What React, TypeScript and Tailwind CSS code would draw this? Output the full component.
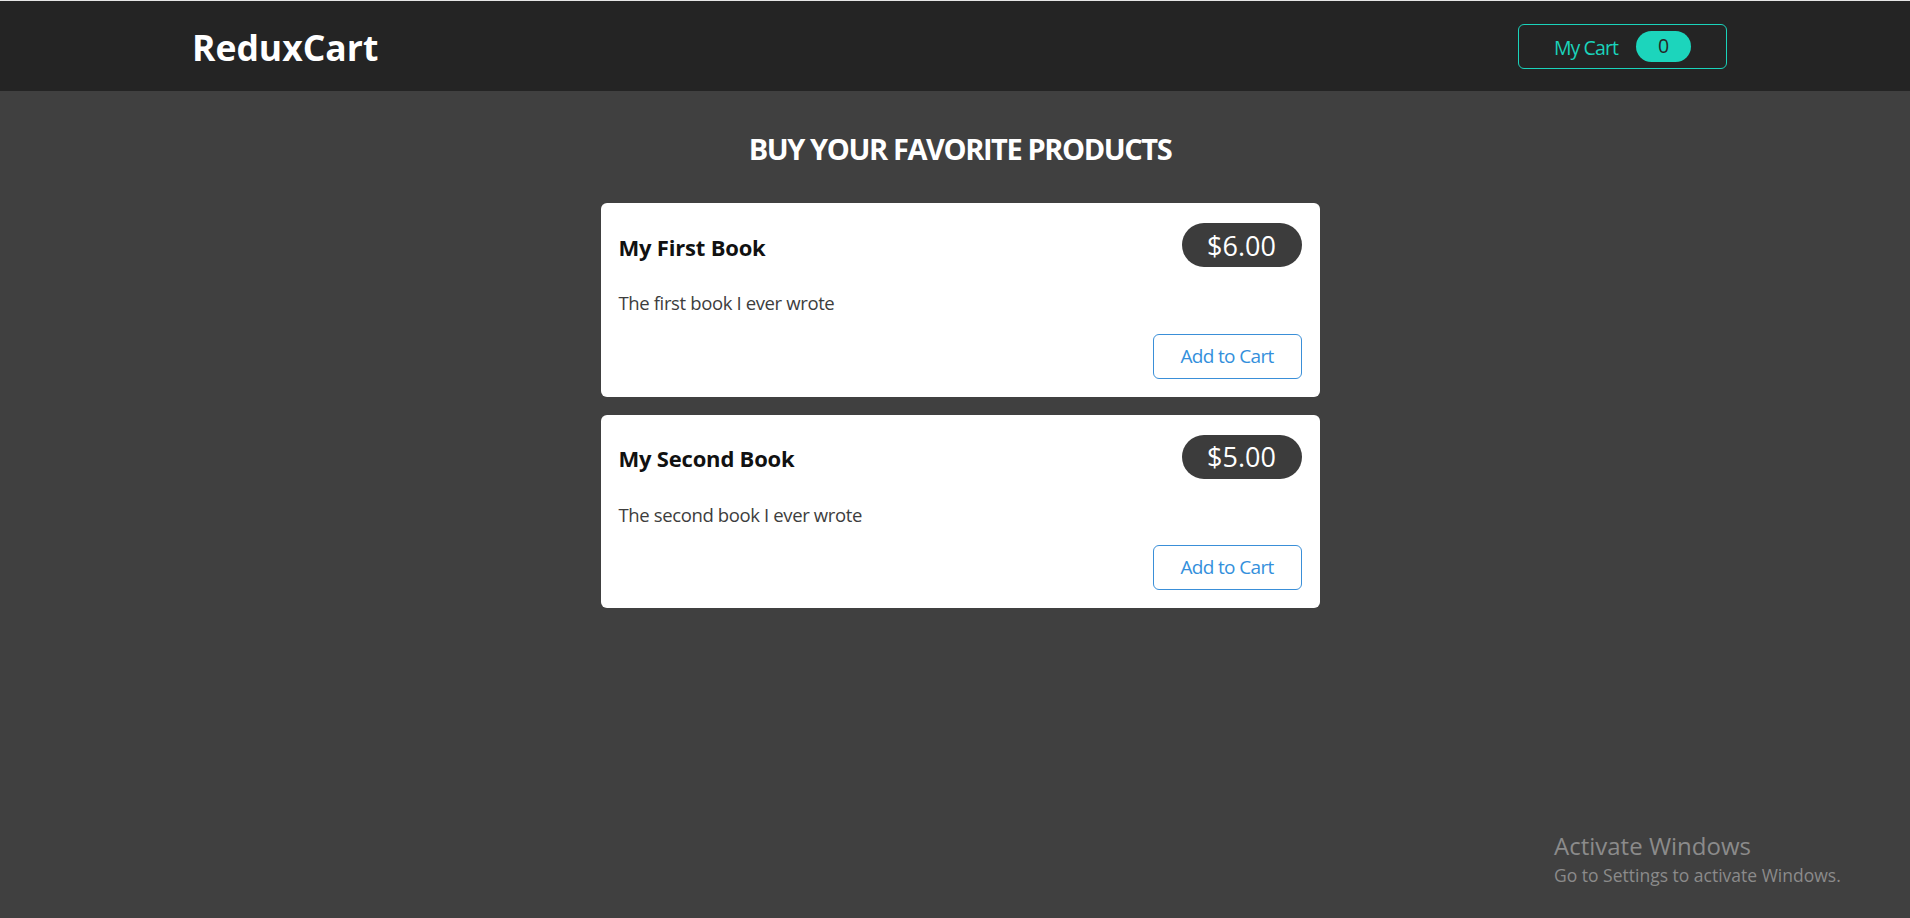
import React from "react";

const products = [
  { title: "My First Book", price: "$6.00", desc: "The first book I ever wrote" },
  { title: "My Second Book", price: "$5.00", desc: "The second book I ever wrote" },
];

export default function App() {
  return (
    <div className="relative min-h-screen bg-[#404040] font-['Open_Sans',sans-serif]">
      <div className="h-px bg-[#e6e6e6]" />
      <header className="flex h-[90px] items-center justify-between bg-[#242424] pl-[192px] pr-[183px]">
        <h1 className="mt-[4px] text-[35.5px] font-bold leading-none text-white">ReduxCart</h1>
        <button className="flex h-[45px] w-[209px] items-center justify-center gap-[18px] rounded-[6px] border border-[#1ad3bb] text-[19.5px] text-[#1ad3bb]">
          <span className="mt-[4px] leading-none tracking-[-0.9px]">My Cart</span>
          <span className="flex h-[31px] w-[55px] items-center justify-center rounded-full bg-[#1cd5bc] text-[19.5px] leading-none text-[#262626]">0</span>
        </button>
      </header>
      <main className="flex flex-col items-center pl-[10px]">
        <h2 className="mt-[43px] text-[29px] font-bold leading-none tracking-[-1.4px] text-white">BUY YOUR FAVORITE PRODUCTS</h2>
        <ul className="mt-[40px] flex flex-col gap-[18px]">
          {products.map((p) => (
            <li key={p.title} className="flex w-[719px] flex-col rounded-[6px] bg-white px-[18px] pb-[18px] pt-[20px]">
              <div className="flex items-center justify-between">
                <h3 className="mt-[3px] text-[22px] font-bold leading-none tracking-[-0.2px] text-[#111]">{p.title}</h3>
                <span className="flex h-[44px] w-[120px] items-center justify-center rounded-full bg-[#3c3c3c] text-[27px] leading-none text-white">{p.price}</span>
              </div>
              <p className="mt-[27px] text-[18.5px] leading-none tracking-[-0.37px] text-[#3d3d3d]">{p.desc}</p>
              <div className="mt-[21px] flex justify-end">
                <button className="flex h-[45px] w-[149px] items-center justify-center rounded-[6px] border border-[#3a8fd8] text-[19px] leading-none tracking-[-0.65px] text-[#3490dc]">Add to Cart</button>
              </div>
            </li>
          ))}
        </ul>
      </main>
      <div className="absolute left-[1554px] top-[832px] text-[#8b8b8b]">
        <div className="text-[24px] leading-[28px]">Activate Windows</div>
        <div className="mt-[4px] text-[17.5px] leading-[22px]">Go to Settings to activate Windows.</div>
      </div>
    </div>
  );
}
